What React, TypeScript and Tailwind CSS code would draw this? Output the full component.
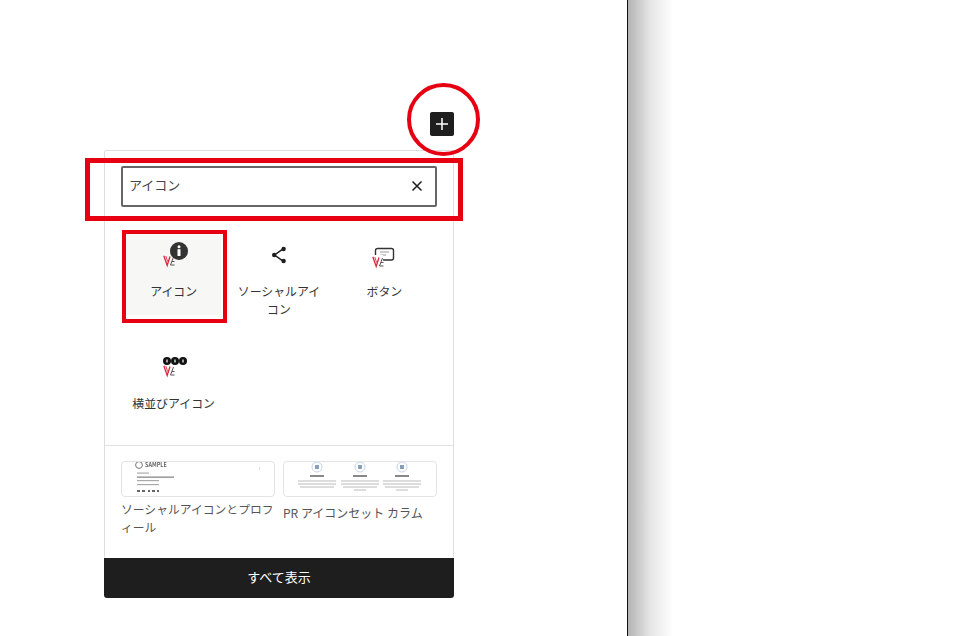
const VkMark = () => (
  <g fill="none" strokeWidth="1.3">
    <path d="M0.8 0.8 L4.2 10.5 L7 1.5" stroke="#d8283c" />
    <path d="M2.8 1 L4.6 6.5" stroke="#d8283c" strokeWidth="0.9" />
    <path d="M7.5 10 L10.5 2 M7.5 10 L11.5 10 M9 6.5 L11.5 6.5" stroke="#555" strokeWidth="1" />
  </g>
)

const InfoIcon = () => (
  <svg width="32" height="26" viewBox="0 0 32 26">
    <g transform="translate(5 13)"><VkMark /></g>
    <circle cx="21" cy="9" r="9" fill="#333" />
    <circle cx="21" cy="4.8" r="1.5" fill="#fff" />
    <rect x="19.5" y="7.2" width="3" height="6.8" fill="#fff" />
  </svg>
)

const ShareIcon = () => (
  <svg width="18" height="18" viewBox="0 0 18 18" fill="#1e1e1e" className="mb-[4px]">
    <path d="M13.5 2.6 L4.5 9 L13.5 15.4" fill="none" stroke="#1e1e1e" strokeWidth="1.5" />
    <circle cx="13.6" cy="3" r="2.2" />
    <circle cx="4.2" cy="9" r="2.2" />
    <circle cx="13.6" cy="15" r="2.2" />
  </svg>
)

const ButtonIcon = () => (
  <svg width="26" height="22" viewBox="0 0 26 22" className="-mb-[1px]">
    <rect x="4.5" y="1.5" width="18" height="11.5" rx="2" fill="none" stroke="#333" strokeWidth="1.4" />
    <path d="M9 5 H18 M9 8 H15" stroke="#999" strokeWidth="1.1" />
    <rect x="0" y="8" width="12" height="14" fill="#fff" />
    <g transform="translate(1 9)"><VkMark /></g>
  </svg>
)

const DotsIcon = () => (
  <svg width="28" height="22" viewBox="0 0 28 22" className="mb-[2px]">
    <g transform="translate(3 9)"><VkMark /></g>
    <circle cx="7" cy="5" r="4" fill="#111" />
    <circle cx="15" cy="5" r="4" fill="#111" />
    <circle cx="23" cy="5" r="4" fill="#111" />
    <path d="M7 3.5 V6.5 M15 3.5 V6.5 M23 3.5 V6.5" stroke="#fff" strokeWidth="1.2" />
  </svg>
)

const BlockItem = ({ icon, label, active }: { icon: React.ReactNode; label: string; active?: boolean }) => (
  <div className="px-[5px] pt-[4px]">
    <div className={`flex h-[85px] flex-col items-center rounded-sm ${active ? "bg-[#f7f7f5]" : ""}`}>
      <div className="flex h-[38px] shrink-0 items-end justify-center">{icon}</div>
      <div className="mt-[14px] w-[92px] shrink-0 text-center text-[11.9px] leading-[18px] text-[#333]">{label}</div>
    </div>
  </div>
)

const ProfilePreview = () => (
  <div className="h-[36px] overflow-hidden rounded border border-[#e4e4e4] bg-white">
    <svg width="152" height="34" viewBox="0 0 152 34" className="blur-[0.5px]">
      <circle cx="17" cy="3" r="3.4" fill="none" stroke="#777" strokeWidth="1" />
      <text x="23" y="5" fontSize="5.5" fontWeight="700" fill="#666">SAMPLE</text>
      <rect x="15" y="10.5" width="12" height="1.2" fill="#aaa" />
      <rect x="15" y="14.5" width="37" height="1.3" fill="#888" />
      <rect x="15" y="18" width="22" height="1.2" fill="#aaa" />
      <rect x="15" y="22" width="22" height="1.2" fill="#aaa" />
      <path d="M15 29 h3 M20 29 h3 M26 29 h2 M30 29 h3 M35 29 h2" stroke="#666" strokeWidth="2" />
      <rect x="137" y="5" width="1" height="3" fill="#ddd" />
    </svg>
  </div>
)

const PrColumn = ({ x, rows = 3 }: { x: number; rows?: number }) => (
  <g transform={`translate(${x} 0)`}>
    <circle cx="0" cy="5" r="5" fill="#fff" stroke="#c3d3e4" strokeWidth="1" />
    <rect x="-2" y="3" width="4" height="4" fill="#8aa0b8" />
    <rect x="-7" y="13" width="14" height="2" fill="#888" />
    <rect x="-19" y="18.5" width="38" height="1" fill="#bbb" />
    <rect x="-19" y="21.5" width="38" height="1" fill="#bbb" />
    <rect x="-17" y="24.5" width="34" height="1" fill="#bbb" />
    {rows > 3 && <rect x="-6" y="27.5" width="12" height="1" fill="#bbb" />}
  </g>
)

const PrPreview = () => (
  <div className="h-[36px] overflow-hidden rounded border border-[#e4e4e4] bg-white">
    <svg width="152" height="34" viewBox="0 0 152 34" className="blur-[0.5px]">
      <PrColumn x={33} />
      <PrColumn x={76} rows={4} />
      <PrColumn x={118} rows={4} />
    </svg>
  </div>
)

export default function App() {
  return (
    <div className="flex h-[636px] w-[960px] overflow-hidden bg-white font-['Noto_Sans_CJK_JP','Noto_Sans',sans-serif]">
      <div className="w-[627px] shrink-0 pl-[104px] pt-[112px]">
        <div className="relative w-[350px]">
          <div className="flex justify-end">
            <div className="flex h-[24px] w-[24px] items-center justify-center rounded-[2px] bg-[#1e1e1e]">
              <svg width="14" height="14" viewBox="0 0 14 14">
                <path d="M7 1 V13 M1 7 H13" stroke="#fff" strokeWidth="1.5" />
              </svg>
            </div>
          </div>

          {/* popover */}
          <div className="mt-[14px] overflow-hidden rounded-[2px] border border-b-0 border-[#dddddd] bg-white">
            <div className="px-[16px] pt-[15px] pb-[19px]">
              <div className="flex h-[41px] items-center justify-between rounded-[2px] border-2 border-[#666] pr-[12px] pl-[6px] text-[13px] text-[#444]">
                <span className="pb-[3px]">アイコン</span>
                <svg width="12" height="12" viewBox="0 0 12 12" className="mb-[1px]">
                  <path d="M1.5 1.5 L10.5 10.5 M10.5 1.5 L1.5 10.5" stroke="#1e1e1e" strokeWidth="1.5" />
                </svg>
              </div>
            </div>
            <div className="grid grid-cols-3 gap-y-[23px] px-[16px] pb-[18px]">
              <BlockItem icon={<InfoIcon />} label="アイコン" active />
              <BlockItem icon={<ShareIcon />} label="ソーシャルアイコン" />
              <BlockItem icon={<ButtonIcon />} label="ボタン" />
              <BlockItem icon={<DotsIcon />} label="横並びアイコン" />
            </div>
            <div className="grid h-[113px] grid-cols-2 gap-x-[8px] border-t border-[#e2e2e2] px-[16px] pt-[15px]">
              <div>
                <ProfilePreview />
                <div className="mt-[3px] text-[11.8px] leading-[18px] text-[#555]">ソーシャルアイコンとプロフィール</div>
              </div>
              <div>
                <PrPreview />
                <div className="mt-[7px] text-[12px] leading-[18px] text-[#555]">PR アイコンセット カラム</div>
              </div>
            </div>
          </div>
          <div className="flex h-[40px] items-center justify-center rounded-b-[3px] bg-[#1e1e1e] pb-[2px] text-[13px] text-white">
            すべて表示
          </div>

          {/* red annotations */}
          <div className="absolute top-[-29px] left-[303px] h-[73px] w-[73px] rounded-full border-[4px] border-[#e60012]" />
          <div className="absolute top-[46px] left-[-19px] h-[63px] w-[378px] border-[5px] border-[#e60012]" />
          <div className="absolute top-[118px] left-[18px] h-[93px] w-[105px] border-[4px] border-[#e60012]" />
        </div>
      </div>
      <div className="w-[1px] shrink-0 bg-[#111]" />
      <div className="h-full w-[45px] bg-gradient-to-r from-[#b4b4b4] via-[#e6e6e6] to-white" />
    </div>
  )
}
